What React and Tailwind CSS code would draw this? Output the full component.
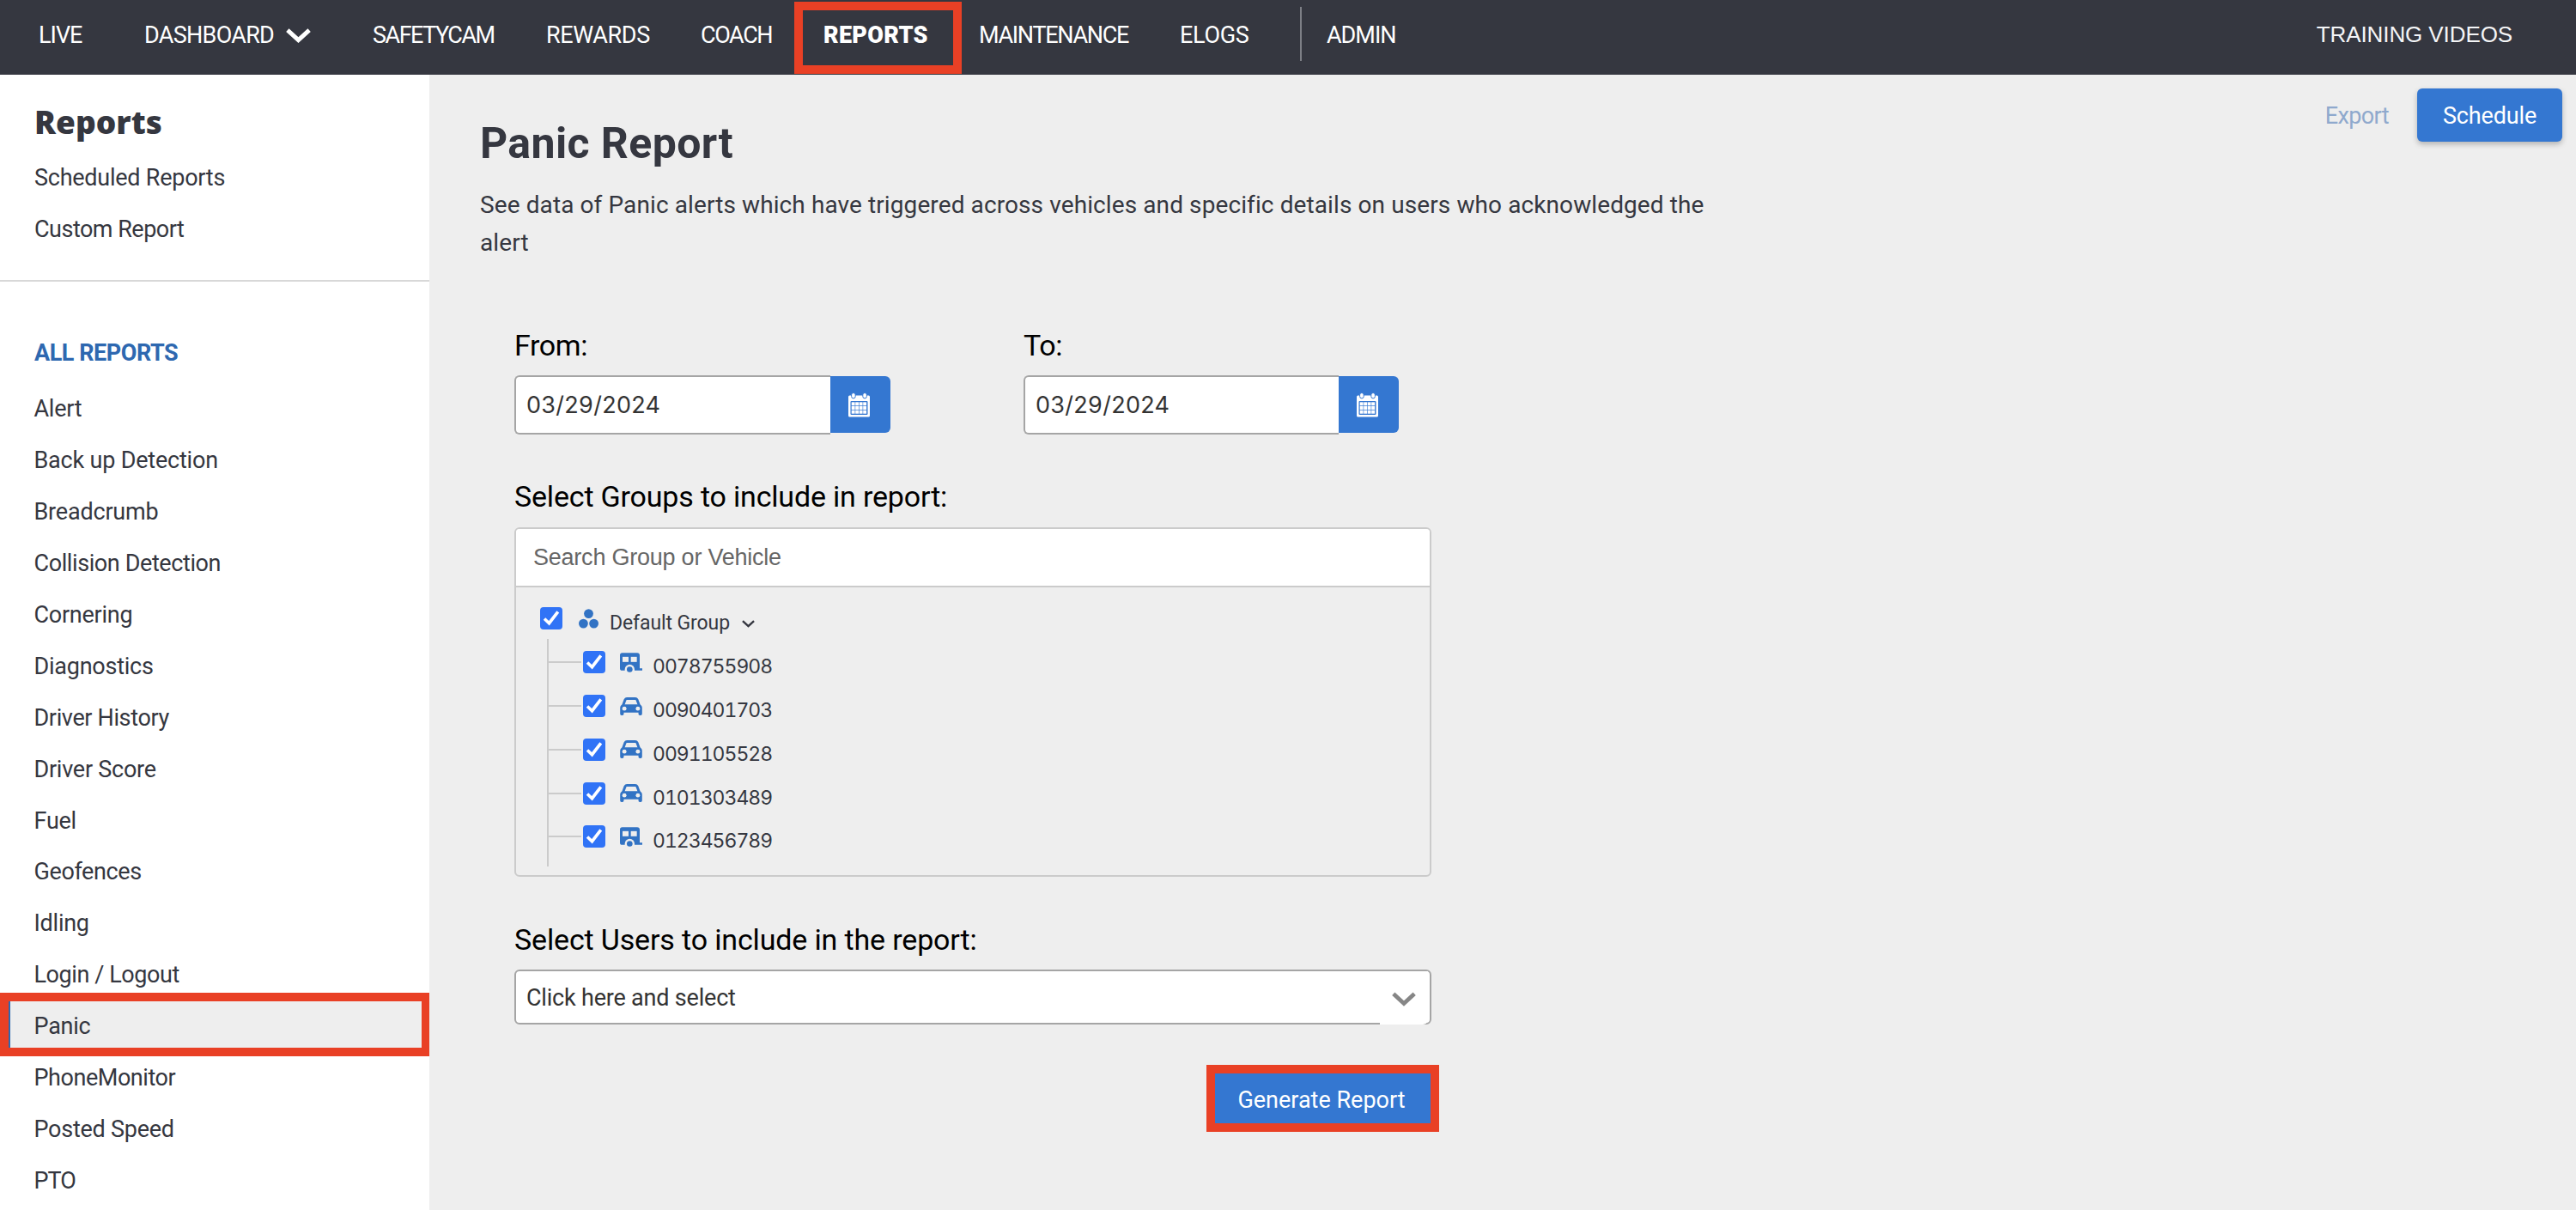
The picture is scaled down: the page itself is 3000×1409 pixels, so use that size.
const reports = [
  { name: "Alert" },
  { name: "Back up Detection", tracking: "tracking-[-0.2px]" },
  { name: "Breadcrumb", tracking: "tracking-[-0.2px]" },
  { name: "Collision Detection", tracking: "tracking-[-0.4px]" },
  { name: "Cornering" },
  { name: "Diagnostics" },
  { name: "Driver History", tracking: "tracking-[-0.36px]" },
  { name: "Driver Score" },
  { name: "Fuel" },
  { name: "Geofences", tracking: "tracking-[-0.4px]" },
  { name: "Idling" },
  { name: "Login / Logout", tracking: "tracking-[-0.42px]" },
  { name: "Panic", active: true },
  { name: "PhoneMonitor", tracking: "tracking-[-0.45px]" },
  { name: "Posted Speed" },
  { name: "PTO", tracking: "tracking-[-1px]" },
];

const vehicles = [
  { id: "0078755908", type: "caravan" },
  { id: "0090401703", type: "car" },
  { id: "0091105528", type: "car" },
  { id: "0101303489", type: "car" },
  { id: "0123456789", type: "caravan" },
];

function Chevron({ className, width }) {
  return (
    <svg viewBox="0 0 28 16" fill="none" stroke="currentColor" strokeWidth={width} className={className}>
      <path d="M1.8 1.8 L14 13 L26.2 1.8" />
    </svg>
  );
}

function CalendarIcon() {
  return (
    <svg viewBox="0 0 25 29" className="w-[25px] h-[29px]">
      <rect x="0" y="3.5" width="25" height="25" rx="1.5" fill="#fff" />
      <rect x="2.5" y="10" width="20" height="16" rx="1" fill="#3477d1" />
      {[3.7, 8.2, 12.7, 17.2].map((x) =>
        [11.3, 16, 20.7].map((y) => <rect key={`${x}-${y}`} x={x} y={y} width="3.9" height="4" fill="#fff" />)
      )}
      <rect x="3.6" y="0.5" width="4.6" height="6.4" rx="2.3" fill="#fff" stroke="#3477d1" strokeWidth="1" />
      <rect x="16.8" y="0.5" width="4.6" height="6.4" rx="2.3" fill="#fff" stroke="#3477d1" strokeWidth="1" />
    </svg>
  );
}

function CarIcon() {
  return (
    <svg viewBox="0 0 78 64" className="w-[26px] h-[21px]">
      <path d="M10 30 L18 8 Q20 4.5 24 4.5 H54 Q58 4.5 60 8 L68 30" fill="none" stroke="#3273c4" strokeWidth="9" />
      <path d="M9 25 H69 Q78 28 78 38 V59 Q78 64 73 64 H70 Q65 64 65 59 V54 H13 V59 Q13 64 8 64 H5 Q0 64 0 59 V38 Q0 28 9 25 Z" fill="#3273c4" />
      <circle cx="15" cy="40" r="7.5" fill="#eee" />
      <circle cx="63" cy="40" r="7.5" fill="#eee" />
    </svg>
  );
}

function CaravanIcon() {
  return (
    <svg viewBox="0 0 78 68" className="w-[26px] h-[23px]">
      <path d="M8 0 H60 Q69 0 69 9 V54 H78 V62 H8 Q0 62 0 54 V8 Q0 0 8 0 Z" fill="#3273c4" />
      <rect x="9" y="14" width="21" height="18" fill="#eee" />
      <rect x="38" y="14" width="21" height="18" fill="#eee" />
      <path d="M17 62.5 V58 A17 17 0 0 1 51 58 V62.5 Z" fill="#eee" />
      <circle cx="34" cy="58" r="10" fill="#3273c4" />
    </svg>
  );
}

function GroupIcon() {
  return (
    <svg viewBox="0 0 70 70" className="w-[23px] h-[23px]" fill="#3273c4">
      <circle cx="35" cy="17" r="16.5" />
      <circle cx="16.5" cy="52" r="16.5" />
      <circle cx="53.5" cy="52" r="16.5" />
    </svg>
  );
}

function Checkbox() {
  return (
    <span className="flex w-[26px] h-[26px] shrink-0 items-center justify-center rounded-[4px] bg-[#3073f6]">
      <svg viewBox="0 0 26 26" fill="none" stroke="#fff" strokeWidth="3.6" className="w-[26px] h-[26px]">
        <path d="M5 13.5 L10.5 18.7 L20.8 5.3" />
      </svg>
    </span>
  );
}

function DateField({ label, value, className }) {
  return (
    <div className={className}>
      <div className="h-[50px] leading-[50px] text-[34px] tracking-[-0.4px] text-black">{label}</div>
      <div className="mt-[10px] flex h-[69px] items-start">
        <div className="flex h-[69px] flex-1 items-center rounded-l-[6px] border-2 border-r-0 border-[#a5a5a5] bg-white pt-[2px] pl-[12px] font-['Inter',sans-serif] text-[27px] tracking-[0.3px] text-[#333]">
          {value}
        </div>
        <div className="mt-px flex h-[66px] w-[70px] items-center justify-center rounded-r-[6px] bg-[#3477d1] pr-1">
          <CalendarIcon />
        </div>
      </div>
    </div>
  );
}

function NavBar() {
  return (
    <nav className="flex h-[87px] items-start bg-[#353740] text-[27px] leading-[83px] text-white whitespace-nowrap">
      <div className="ml-[45px] w-[123px] tracking-[-1px]">LIVE</div>
      <div className="flex w-[266px] items-center tracking-[-0.7px]">
        DASHBOARD
        <Chevron className="ml-[14px] w-[29px] h-[17px]" width="4.8" />
      </div>
      <div className="w-[202px] tracking-[-1.5px]">SAFETYCAM</div>
      <div className="w-[180px] tracking-[-0.35px]">REWARDS</div>
      <div className="w-[109px] tracking-[-1.4px]">COACH</div>
      <div className="mt-[2px] h-[84px] w-[195px] border-10 border-[#e94025] pl-[24px] leading-[59px] font-black tracking-[0.3px]">REPORTS</div>
      <div className="ml-[20px] w-[234px] tracking-[-1.3px]">MAINTENANCE</div>
      <div className="w-[140px] tracking-[-0.3px]">ELOGS</div>
      <div className="mt-[8px] h-[63px] w-[2px] bg-[#7d7f86]" />
      <div className="ml-[29px] tracking-[-1px]">ADMIN</div>
      <div className="ml-auto mr-[74px] font-['Liberation_Sans',sans-serif] text-[26px] leading-[80px] tracking-[-0.1px] text-[#f4f5f7]">TRAINING VIDEOS</div>
    </nav>
  );
}

function Sidebar() {
  return (
    <aside className="h-[1322px] w-[500px] shrink-0 overflow-hidden bg-white leading-[60px]">
      <div className="h-[230px] pt-[25px] pl-[40px]">
        <div className="font-['Open_Sans',sans-serif] text-[37px] font-extrabold">Reports</div>
        <div className="mt-[5px] tracking-[-0.25px]">Scheduled Reports</div>
        <div className="tracking-[-0.5px]">Custom Report</div>
      </div>
      <div className="mt-[9px] h-[2px] bg-[#d8d8d8]" />
      <div className="mt-[53px] pl-[40px] font-bold tracking-[-0.46px] text-[#2e68b0]">ALL REPORTS</div>
      <ul className="mt-[5px]">
        {reports.map((r) => (
          <li key={r.name} className={`relative h-[59.94px] pl-[39.5px] ${r.tracking || "tracking-[-0.25px]"}`}>
            {r.active && (
              <div className="absolute -top-[9px] left-0 h-[74px] w-[501px] border-10 border-[#e94025] bg-[#eee]">
                <div className="h-full w-[2px] bg-[#2e68b0]" />
              </div>
            )}
            <span className="relative">{r.name}</span>
          </li>
        ))}
      </ul>
    </aside>
  );
}

function GroupTree() {
  return (
    <div className="h-[407px] w-[1068px] overflow-hidden rounded-[6px] border-2 border-[#cbcbcb]">
      <div className="h-[68px] border-b-2 border-[#cbcbcb] bg-white pl-[20px] font-['Liberation_Sans',sans-serif] text-[27px] leading-[66px] tracking-[-0.23px] text-[#666]">
        Search Group or Vehicle
      </div>
      <div className="pt-[23px] pl-[28px]">
        <div className="flex h-[26px] items-center">
          <Checkbox />
          <div className="ml-[19px]"><GroupIcon /></div>
          <div className="mt-[12px] ml-[13px] text-[23px] leading-[26px] tracking-[-0.1px]">Default Group</div>
          <Chevron className="mt-[12px] ml-[14px] w-[15px] h-[9px]" width="4.4" />
        </div>
        <ul className="mt-[11px] ml-[8px] h-[265px] border-l-2 border-[#cbcbcb]">
          {vehicles.map((v) => (
            <li key={v.id} className="flex h-[50.75px] items-center pt-[4px]">
              <div className="mr-[2px] h-[2px] w-[38px] bg-[#cbcbcb]" />
              <Checkbox />
              <div className="ml-[17px]">{v.type === "car" ? <CarIcon /> : <CaravanIcon />}</div>
              <div className="mt-[10px] ml-[12px] font-['Inter',sans-serif] text-[23px] leading-[26px] tracking-[-1px] tabular-nums">{v.id}</div>
            </li>
          ))}
        </ul>
      </div>
    </div>
  );
}

export default function App() {
  return (
    <div className="h-[1409px] w-[3000px] overflow-hidden bg-[#eee] font-['Roboto',sans-serif] text-[27px] text-[#353740]">
      <NavBar />
      <div className="flex">
        <Sidebar />
        <main className="flex flex-1 items-start justify-between pl-[59px]">
          <div className="pt-[50px]">
            <h1 className="text-[50px] leading-[60px] font-bold tracking-[0.4px]">Panic Report</h1>
            <p className="mt-[20px] w-[1460px] text-[28px] leading-[44px] tracking-[0.1px]">
              See data of Panic alerts which have triggered across vehicles and specific details on users who acknowledged the alert
            </p>
            <div className="mt-[72px] ml-[40px] w-[1068px]">
              <div className="flex">
                <DateField label="From:" value="03/29/2024" className="w-[438px]" />
                <DateField label="To:" value="03/29/2024" className="ml-[155px] w-[437px]" />
              </div>
              <div className="mt-[47px] h-[61px] text-[34px] leading-[50px] tracking-[-0.18px] text-black">Select Groups to include in report:</div>
              <GroupTree />
              <div className="mt-[48px] h-[60px] text-[34px] leading-[50px] tracking-[-0.15px] text-black">Select Users to include in the report:</div>
              <div className="relative h-[64px] rounded-[6px] border-2 border-[#a5a5a5] bg-white pl-[12px] leading-[63px] tracking-[-0.2px] text-[#333]">
                Click here and select
                <div className="absolute top-0 right-[2px] flex h-[62px] w-[56px] items-center justify-center rounded-br-[6px] bg-white pt-[2px] pr-px text-[#868686]">
                  <Chevron className="w-[28px] h-[17px]" width="4.8" />
                </div>
              </div>
              <div className="mt-[47px] -mr-[9px] ml-auto h-[78px] w-[271px] border-10 border-[#e94025] bg-[#3477d1] pr-[3px] text-center leading-[62px] text-white">
                Generate Report
              </div>
            </div>
          </div>
          <div className="mt-[16px] mr-[16px] flex items-start leading-[64px]">
            <div className="mr-[33px] tracking-[-0.6px] text-[#8fa9cd]">Export</div>
            <div className="h-[62px] w-[169px] rounded-[6px] bg-[#3477d1] text-center tracking-[-0.15px] text-white shadow-[0_3px_6px_rgba(0,0,0,0.25)]">Schedule</div>
          </div>
        </main>
      </div>
    </div>
  );
}
